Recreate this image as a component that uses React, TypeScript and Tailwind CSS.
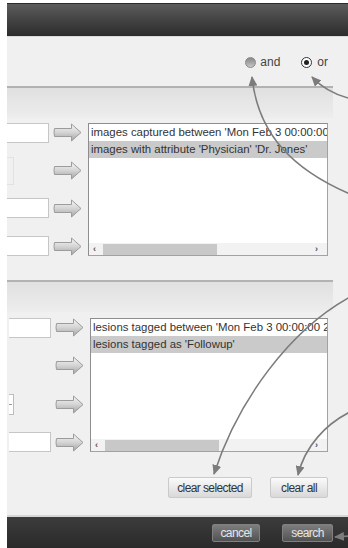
import React from "react";

const queries = {
  images: {
    rows: ["images captured between 'Mon Feb 3 00:00:00 2014' and 'Fri Feb 7 00:00:00 2014'", "images with attribute 'Physician' 'Dr. Jones'"],
  },
  lesions: {
    rows: ["lesions tagged between 'Mon Feb 3 00:00:00 2014' and 'Fri Feb 7 00:00:00 2014'", "lesions tagged as 'Followup'"],
  },
};

function AddArrow() {
  return (
    <svg width="29" height="19" viewBox="0 0 29 19" className="block">
      <defs>
        <linearGradient id="addArrowFill" x1="0" y1="0" x2="0" y2="1">
          <stop offset="0" stopColor="#f6f6f6" />
          <stop offset="0.5" stopColor="#d4d4d4" />
          <stop offset="1" stopColor="#a4a4a4" />
        </linearGradient>
      </defs>
      <path
        d="M1.5 5.5 H18.5 V1 L28 9.5 L18.5 18 V13.5 H1.5 Q0.5 9.5 1.5 5.5 Z"
        fill="url(#addArrowFill)"
        stroke="#9c9c9c"
        strokeWidth="1"
        strokeLinejoin="round"
      />
    </svg>
  );
}

function ListBox({ rows, width, height }: { rows: string[]; width: string; height: string }) {
  return (
    <div className={`flex flex-col overflow-hidden border border-[#a2a2a2] border-l-[#8e8e8e] border-t-[#8e8e8e] bg-white ${width} ${height}`}>
      {rows.map((r, i) => (
        <div
          key={r}
          className={`h-[17px] overflow-hidden whitespace-nowrap px-[2px] text-[11.4px] leading-[17px] text-[#333] ${i === 1 ? "bg-[#cacaca]" : ""}`}
        >
          {r}
        </div>
      ))}
      <div className="flex-1" />
      {/* horizontal scrollbar */}
      <div className="flex h-[12px] items-center bg-[#f2f2f2] text-[9px] font-bold leading-none text-[#555]">
        <span className="w-[14px] pl-[4px]">‹</span>
        <div className="h-[11px] w-[114px] bg-[#c8c8c8]" />
        <div className="flex-1" />
        <span className="w-[12px]">›</span>
      </div>
    </div>
  );
}

function CriteriaRows({
  rows,
  inputW,
  listW,
  listH,
  row2,
  row3,
}: {
  rows: string[];
  inputW: string;
  listW: string;
  listH: string;
  row2: React.ReactNode;
  row3: React.ReactNode;
}) {
  const input = <div className={`h-[20px] border border-l-0 border-[#c6c6c6] bg-white ${inputW}`} />;
  return (
    <div className="flex items-stretch">
      <div className={`flex flex-col justify-between ${inputW}`}>
        {input}
        <div className="flex h-[20px] items-center">{row2}</div>
        <div className="flex h-[20px] items-center">{row3}</div>
        {input}
      </div>
      <div className="ml-[4px] flex flex-col justify-between">
        <AddArrow />
        <AddArrow />
        <AddArrow />
        <AddArrow />
      </div>
      <div className="ml-[6px]">
        <ListBox rows={rows} width={listW} height={listH} />
      </div>
    </div>
  );
}

function SectionBand() {
  return (
    <>
      <div className="h-[2px] w-[326px] bg-[#b2b2b2]" />
      <div className="h-[30px] w-[326px] bg-linear-to-b from-[#e0e0e0] to-[#ededed]" />
    </>
  );
}

function LightButton({ label, w }: { label: string; w: string }) {
  return (
    <button
      className={`h-[21px] rounded-[2px] border border-[#cacaca] bg-linear-to-b from-[#fafafa] to-[#d9d9d9] text-[12px] leading-none tracking-[-0.6px] text-[#333] ${w}`}
    >
      {label}
    </button>
  );
}

function DarkButton({ label, w }: { label: string; w: string }) {
  return (
    <button
      className={`h-[18px] rounded-[2px] border border-[#808080] bg-linear-to-b from-[#7e7e7e] to-[#525252] text-[12px] leading-none tracking-[-0.6px] text-[#e6e6e6] ${w}`}
    >
      {label}
    </button>
  );
}

export default function App() {
  return (
    <div className="relative h-[548px] w-[348px] overflow-hidden bg-white font-['Liberation_Sans',Arial,sans-serif]">
      <div className="ml-[7px] flex flex-col pt-[3px]">
        {/* title bar */}
        <div className="h-[33px] border-t border-[#2b2b2b] bg-linear-to-b from-[#5c5c5c] to-[#2c2c2c]" />
        <div className="h-px bg-[#dadada]" />

        <div className="flex flex-col bg-[#f0f0f0]">
          {/* match mode */}
          <div className="flex h-[49px] items-center justify-end pr-[20px] pt-[1px] text-[12px] text-[#444]">
            <div className="flex items-center gap-[4px]">
              <span className="block h-[11px] w-[11px] rounded-full border border-[#888] bg-linear-to-b from-[#8a8a8a] via-[#a4a4a4] to-[#c8c8c8]" />
              <span>and</span>
            </div>
            <div className="ml-[21px] flex items-center gap-[5px]">
              <span className="flex h-[11px] w-[11px] items-center justify-center rounded-full border-[1.5px] border-[#333] bg-white">
                <span className="block h-[5px] w-[5px] rounded-full bg-[#222]" />
              </span>
              <span>or</span>
            </div>
          </div>

          {/* images section */}
          <SectionBand />
          <div className="pb-[24px] pt-[5px]">
            <CriteriaRows
              rows={queries.images.rows}
              inputW="w-[42px]"
              listW="w-[240px]"
              listH="h-[133px]"
              row2={<div className="h-[28px] w-[7px] border border-l-0 border-[#e2e2e2]" />}
              row3={<div className="h-[20px] w-[42px] border border-l-0 border-[#c6c6c6] bg-white" />}
            />
          </div>

          {/* lesions section */}
          <SectionBand />
          <div className="pl-[2px] pt-[6px]">
            <CriteriaRows
              rows={queries.lesions.rows}
              inputW="w-[42px]"
              listW="w-[238px]"
              listH="h-[134px]"
              row2={null}
              row3={
                <div className="flex h-[21px] w-[5px] items-center border border-l-0 border-[#bdbdbd] bg-white">
                  <span className="block h-px w-[3px] bg-[#999]" />
                </div>
              }
            />
          </div>

          <div className="flex justify-end gap-[18px] pb-[17px] pr-[20px] pt-[25px]">
            <LightButton label="clear selected" w="w-[84px]" />
            <LightButton label="clear all" w="w-[58px]" />
          </div>
        </div>

        {/* footer */}
        <div className="h-[2px] bg-[#d6d6d6]" />
        <div className="flex h-[31px] items-center justify-end gap-[22px] bg-linear-to-b from-[#3c3c3c] to-[#2a2a2a] pr-[15px]">
          <DarkButton label="cancel" w="w-[48px]" />
          <DarkButton label="search" w="w-[51px]" />
        </div>
      </div>

      {/* callout arrows */}
      <svg className="pointer-events-none absolute inset-0" width="348" height="548" viewBox="0 0 348 548">
        <defs>
          <marker id="tip" markerWidth="10" markerHeight="9" refX="9" refY="4.5" orient="auto" markerUnits="userSpaceOnUse">
            <path d="M0,0 L10,4.5 L0,9 Z" fill="#7c7c7c" />
          </marker>
        </defs>
        <g fill="none" stroke="#7c7c7c" strokeWidth="1.6">
          <path d="M348 98 Q326 92 312 77" markerEnd="url(#tip)" />
          <path d="M350 194 C294 170 258 135 252 77" markerEnd="url(#tip)" />
          <path d="M350 297 C290 330 238 400 214 474" markerEnd="url(#tip)" />
          <path d="M350 412 C326 424 305 446 298 475" markerEnd="url(#tip)" />
          <path d="M350 536 L335 537" markerEnd="url(#tip)" />
        </g>
      </svg>
    </div>
  );
}
